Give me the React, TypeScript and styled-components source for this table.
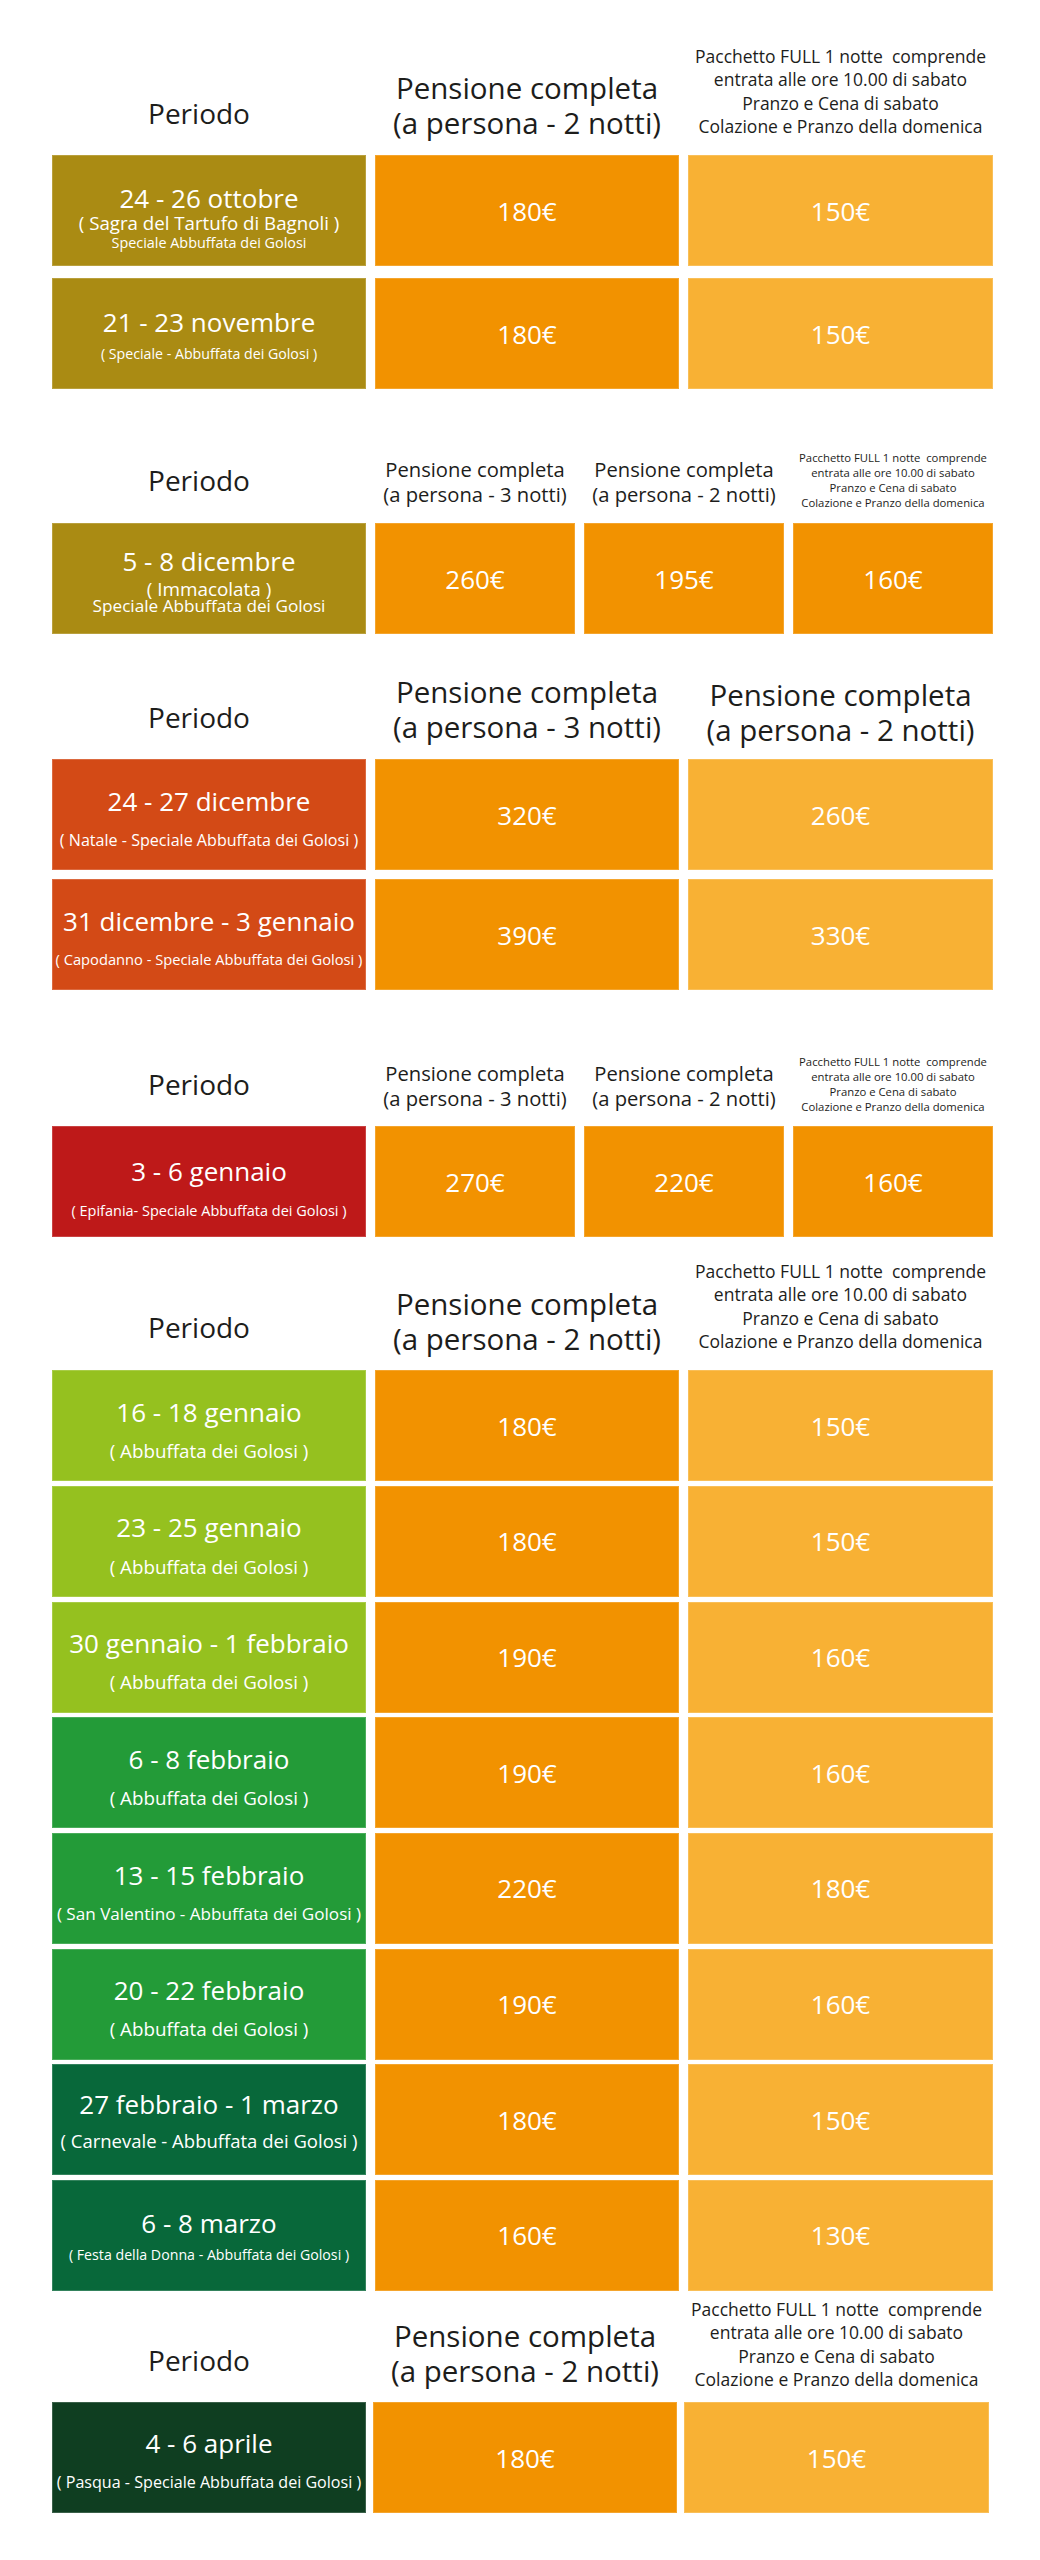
import React from 'react';
import styled, { createGlobalStyle } from 'styled-components';

const GlobalStyle = createGlobalStyle`
  html, body { margin: 0; padding: 0; background: #ffffff; }
  body {
    font-family: "Open Sans", "Liberation Sans", sans-serif;
    color: #1d1d1b;
  }
`;

const OLIVE = '#aa8b13';
const RUST = '#d34a16';
const RED = '#be1919';
const LIME = '#95c11f';
const GREEN = '#239b38';
const FOREST = '#08683a';
const PINE = '#0f3e21';

const ORANGE = '#f29200';
const AMBER = '#f8b134';

const COLS3 = '314px 304px 305px';
const COLS4 = '314px 200px 200px 200px';

const Page = styled.main`
  width: 1040px;
  min-height: 2560px;
  box-sizing: border-box;
  padding-left: 52px;
  display: flex;
  flex-direction: column;
`;

const Block = styled.section<{ $mt: number }>`
  margin-top: ${(p) => p.$mt}px;
  display: flex;
  flex-direction: column;
`;

const HeaderRow = styled.div<{ $cols: string; $colGap: number }>`
  display: grid;
  grid-template-columns: ${(p) => p.$cols};
  column-gap: ${(p) => p.$colGap}px;
  align-items: end;
`;

const PeriodHead = styled.div<{ $pb: number }>`
  font-size: 28px;
  line-height: 34px;
  text-align: center;
  padding: 0 20px ${(p) => p.$pb}px 0;
  white-space: nowrap;
`;

const PensionHead = styled.div<{ $size: number; $lh: number; $pb: number }>`
  font-size: ${(p) => p.$size}px;
  line-height: ${(p) => p.$lh}px;
  text-align: center;
  padding-bottom: ${(p) => p.$pb}px;
  white-space: nowrap;
`;

const PackageHead = styled.div<{ $size: number; $lh: number; $pb: number }>`
  font-size: ${(p) => p.$size}px;
  line-height: ${(p) => p.$lh}px;
  text-align: center;
  padding-bottom: ${(p) => p.$pb}px;
  white-space: nowrap;
`;

const HeadLine = styled.div``;

const Body = styled.div<{ $cols: string; $colGap: number; $gap: number; $rowH: number }>`
  display: grid;
  grid-template-columns: ${(p) => p.$cols};
  grid-auto-rows: ${(p) => p.$rowH}px;
  column-gap: ${(p) => p.$colGap}px;
  row-gap: ${(p) => p.$gap}px;
`;

const PeriodCell = styled.div<{ $bg: string; $pt: number }>`
  background: ${(p) => p.$bg};
  color: #ffffff;
  display: flex;
  flex-direction: column;
  align-items: center;
  justify-content: center;
  box-sizing: border-box;
  padding-top: ${(p) => p.$pt}px;
  text-align: center;
  box-shadow: inset 0 0 0 1px rgba(255, 255, 255, 0.18);
`;

const PeriodTitle = styled.div`
  font-size: 26px;
  line-height: 1.2;
  white-space: nowrap;
`;

const PeriodSub = styled.div<{ $size: number; $mt: number }>`
  font-size: ${(p) => p.$size}px;
  line-height: 1.2;
  margin-top: ${(p) => p.$mt}px;
  white-space: nowrap;
`;

const PriceCell = styled.div<{ $tone: 'dark' | 'light' }>`
  background: ${(p) => (p.$tone === 'dark' ? ORANGE : AMBER)};
  color: #ffffff;
  display: flex;
  align-items: center;
  justify-content: center;
  font-size: 26px;
  box-shadow: inset 0 0 0 1px rgba(255, 255, 255, 0.18);
`;

type Sub = { text: string; size: number; mt: number };
type Row = { bg: string; title: string; subs: Sub[]; pt: number; prices: string[] };
type Head =
  | { kind: 'pension'; lines: string[]; size: number; lh: number; pb: number }
  | { kind: 'package'; size: number; lh: number; pb: number };

type BlockData = {
  mt: number;
  cols: string;
  colGap: number;
  periodPb: number;
  heads: Head[];
  tones: ('dark' | 'light')[];
  gap: number;
  rows: Row[];
};

const PACKAGE_LINES = [
  'Pacchetto FULL 1 notte\u00a0 comprende',
  'entrata alle ore 10.00 di sabato',
  'Pranzo e Cena di sabato',
  'Colazione e Pranzo della domenica',
];

const P2 = ['Pensione completa', '(a persona - 2 notti)'];
const P3 = ['Pensione completa', '(a persona - 3 notti)'];

const AG = '( Abbuffata dei Golosi )';

const blocks: BlockData[] = [
  {
    mt: 45,
    cols: COLS3,
    colGap: 9,
    periodPb: 25,
    heads: [
      { kind: 'pension', lines: P2, size: 29.5, lh: 35, pb: 15 },
      { kind: 'package', size: 17.5, lh: 23.3, pb: 17 },
    ],
    tones: ['dark', 'light'],
    gap: 12,
    rows: [
      {
        bg: OLIVE,
        title: '24 - 26 ottobre',
        subs: [
          { text: '( Sagra del Tartufo di Bagnoli )', size: 18.7, mt: -2 },
          { text: 'Speciale Abbuffata dei Golosi', size: 14.4, mt: 0 },
        ],
        pt: 13,
        prices: ['180€', '150€'],
      },
      {
        bg: OLIVE,
        title: '21 - 23 novembre',
        subs: [{ text: '( Speciale - Abbuffata dei Golosi )', size: 14.2, mt: 7 }],
        pt: 1,
        prices: ['180€', '150€'],
      },
    ],
  },
  {
    mt: 60.6,
    cols: COLS4,
    colGap: 9,
    periodPb: 26,
    heads: [
      { kind: 'pension', lines: P3, size: 20.2, lh: 25, pb: 16.5 },
      { kind: 'pension', lines: P2, size: 20.2, lh: 25, pb: 16.5 },
      { kind: 'package', size: 11.3, lh: 15, pb: 13.4 },
    ],
    tones: ['dark', 'dark', 'dark'],
    gap: 9,
    rows: [
      {
        bg: OLIVE,
        title: '5 - 8 dicembre',
        subs: [
          { text: '( Immacolata )', size: 18.9, mt: 1 },
          { text: 'Speciale Abbuffata dei Golosi', size: 17.2, mt: -5 },
        ],
        pt: 5,
        prices: ['260€', '195€', '160€'],
      },
    ],
  },
  {
    mt: 40,
    cols: COLS3,
    colGap: 9,
    periodPb: 25,
    heads: [
      { kind: 'pension', lines: P3, size: 29.5, lh: 35, pb: 15 },
      { kind: 'pension', lines: P2, size: 29.5, lh: 35, pb: 12 },
    ],
    tones: ['dark', 'light'],
    gap: 9,
    rows: [
      {
        bg: RUST,
        title: '24 - 27 dicembre',
        subs: [{ text: '( Natale - Speciale Abbuffata dei Golosi )', size: 16.1, mt: 13.6 }],
        pt: 7,
        prices: ['320€', '260€'],
      },
      {
        bg: RUST,
        title: '31 dicembre - 3 gennaio',
        subs: [{ text: '( Capodanno - Speciale Abbuffata dei Golosi )', size: 14.7, mt: 14 }],
        pt: 6,
        prices: ['390€', '330€'],
      },
    ],
  },
  {
    mt: 63.6,
    cols: COLS4,
    colGap: 9,
    periodPb: 25,
    heads: [
      { kind: 'pension', lines: P3, size: 20.2, lh: 25, pb: 15.5 },
      { kind: 'pension', lines: P2, size: 20.2, lh: 25, pb: 15.5 },
      { kind: 'package', size: 11.3, lh: 15, pb: 12.4 },
    ],
    tones: ['dark', 'dark', 'dark'],
    gap: 9,
    rows: [
      {
        bg: RED,
        title: '3 - 6 gennaio',
        subs: [{ text: '( Epifania- Speciale Abbuffata dei Golosi )', size: 14.5, mt: 14.2 }],
        pt: 12,
        prices: ['270€', '220€', '160€'],
      },
    ],
  },
  {
    mt: 22.9,
    cols: COLS3,
    colGap: 9,
    periodPb: 26,
    heads: [
      { kind: 'pension', lines: P2, size: 29.5, lh: 35, pb: 14 },
      { kind: 'package', size: 17.5, lh: 23.3, pb: 16.9 },
    ],
    tones: ['dark', 'light'],
    gap: 4.7,
    rows: [
      { bg: LIME, title: '16 - 18 gennaio', subs: [{ text: AG, size: 18.8, mt: 12 }], pt: 8, prices: ['180€', '150€'] },
      { bg: LIME, title: '23 - 25 gennaio', subs: [{ text: AG, size: 18.8, mt: 12 }], pt: 8, prices: ['180€', '150€'] },
      { bg: LIME, title: '30 gennaio - 1 febbraio', subs: [{ text: AG, size: 18.8, mt: 12 }], pt: 8, prices: ['190€', '160€'] },
      { bg: GREEN, title: '6 - 8 febbraio', subs: [{ text: AG, size: 18.8, mt: 12 }], pt: 8, prices: ['190€', '160€'] },
      {
        bg: GREEN,
        title: '13 - 15 febbraio',
        subs: [{ text: '( San Valentino - Abbuffata dei Golosi )', size: 17.1, mt: 13.4 }],
        pt: 8,
        prices: ['220€', '180€'],
      },
      { bg: GREEN, title: '20 - 22 febbraio', subs: [{ text: AG, size: 18.8, mt: 12 }], pt: 8, prices: ['190€', '160€'] },
      {
        bg: FOREST,
        title: '27 febbraio - 1 marzo',
        subs: [{ text: '( Carnevale - Abbuffata dei Golosi )', size: 18.5, mt: 9.7 }],
        pt: 2,
        prices: ['180€', '150€'],
      },
      {
        bg: FOREST,
        title: '6 - 8 marzo',
        subs: [{ text: '( Festa della Donna - Abbuffata dei Golosi )', size: 14.2, mt: 7.5 }],
        pt: 0,
        prices: ['160€', '130€'],
      },
    ],
  },
  {
    mt: 7,
    cols: COLS3,
    colGap: 7,
    periodPb: 25,
    heads: [
      { kind: 'pension', lines: P2, size: 29.5, lh: 35, pb: 13.6 },
      { kind: 'package', size: 17.5, lh: 23.3, pb: 10.9 },
    ],
    tones: ['dark', 'light'],
    gap: 0,
    rows: [
      {
        bg: PINE,
        title: '4 - 6 aprile',
        subs: [{ text: '( Pasqua - Speciale Abbuffata dei Golosi )', size: 16.1, mt: 13.6 }],
        pt: 5,
        prices: ['180€', '150€'],
      },
    ],
  },
];

function HeadCell({ head }: { head: Head }) {
  if (head.kind === 'pension') {
    return (
      <PensionHead $size={head.size} $lh={head.lh} $pb={head.pb}>
        {head.lines.map((l) => (
          <HeadLine key={l}>{l}</HeadLine>
        ))}
      </PensionHead>
    );
  }
  return (
    <PackageHead $size={head.size} $lh={head.lh} $pb={head.pb}>
      {PACKAGE_LINES.map((l) => (
        <HeadLine key={l}>{l}</HeadLine>
      ))}
    </PackageHead>
  );
}

function PriceBlock({ data }: { data: BlockData }) {
  return (
    <Block $mt={data.mt}>
      <HeaderRow $cols={data.cols} $colGap={data.colGap}>
        <PeriodHead $pb={data.periodPb}>Periodo</PeriodHead>
        {data.heads.map((h, i) => (
          <HeadCell key={i} head={h} />
        ))}
      </HeaderRow>
      <Body $cols={data.cols} $colGap={data.colGap} $gap={data.gap} $rowH={111}>
        {data.rows.map((r) => (
          <React.Fragment key={r.title}>
            <PeriodCell $bg={r.bg} $pt={r.pt}>
              <PeriodTitle>{r.title}</PeriodTitle>
              {r.subs.map((s) => (
                <PeriodSub key={s.text} $size={s.size} $mt={s.mt}>
                  {s.text}
                </PeriodSub>
              ))}
            </PeriodCell>
            {r.prices.map((p, i) => (
              <PriceCell key={i} $tone={data.tones[i]}>
                {p}
              </PriceCell>
            ))}
          </React.Fragment>
        ))}
      </Body>
    </Block>
  );
}

export default function App() {
  return (
    <>
      <GlobalStyle />
      <Page>
        {blocks.map((b, i) => (
          <PriceBlock key={i} data={b} />
        ))}
      </Page>
    </>
  );
}
